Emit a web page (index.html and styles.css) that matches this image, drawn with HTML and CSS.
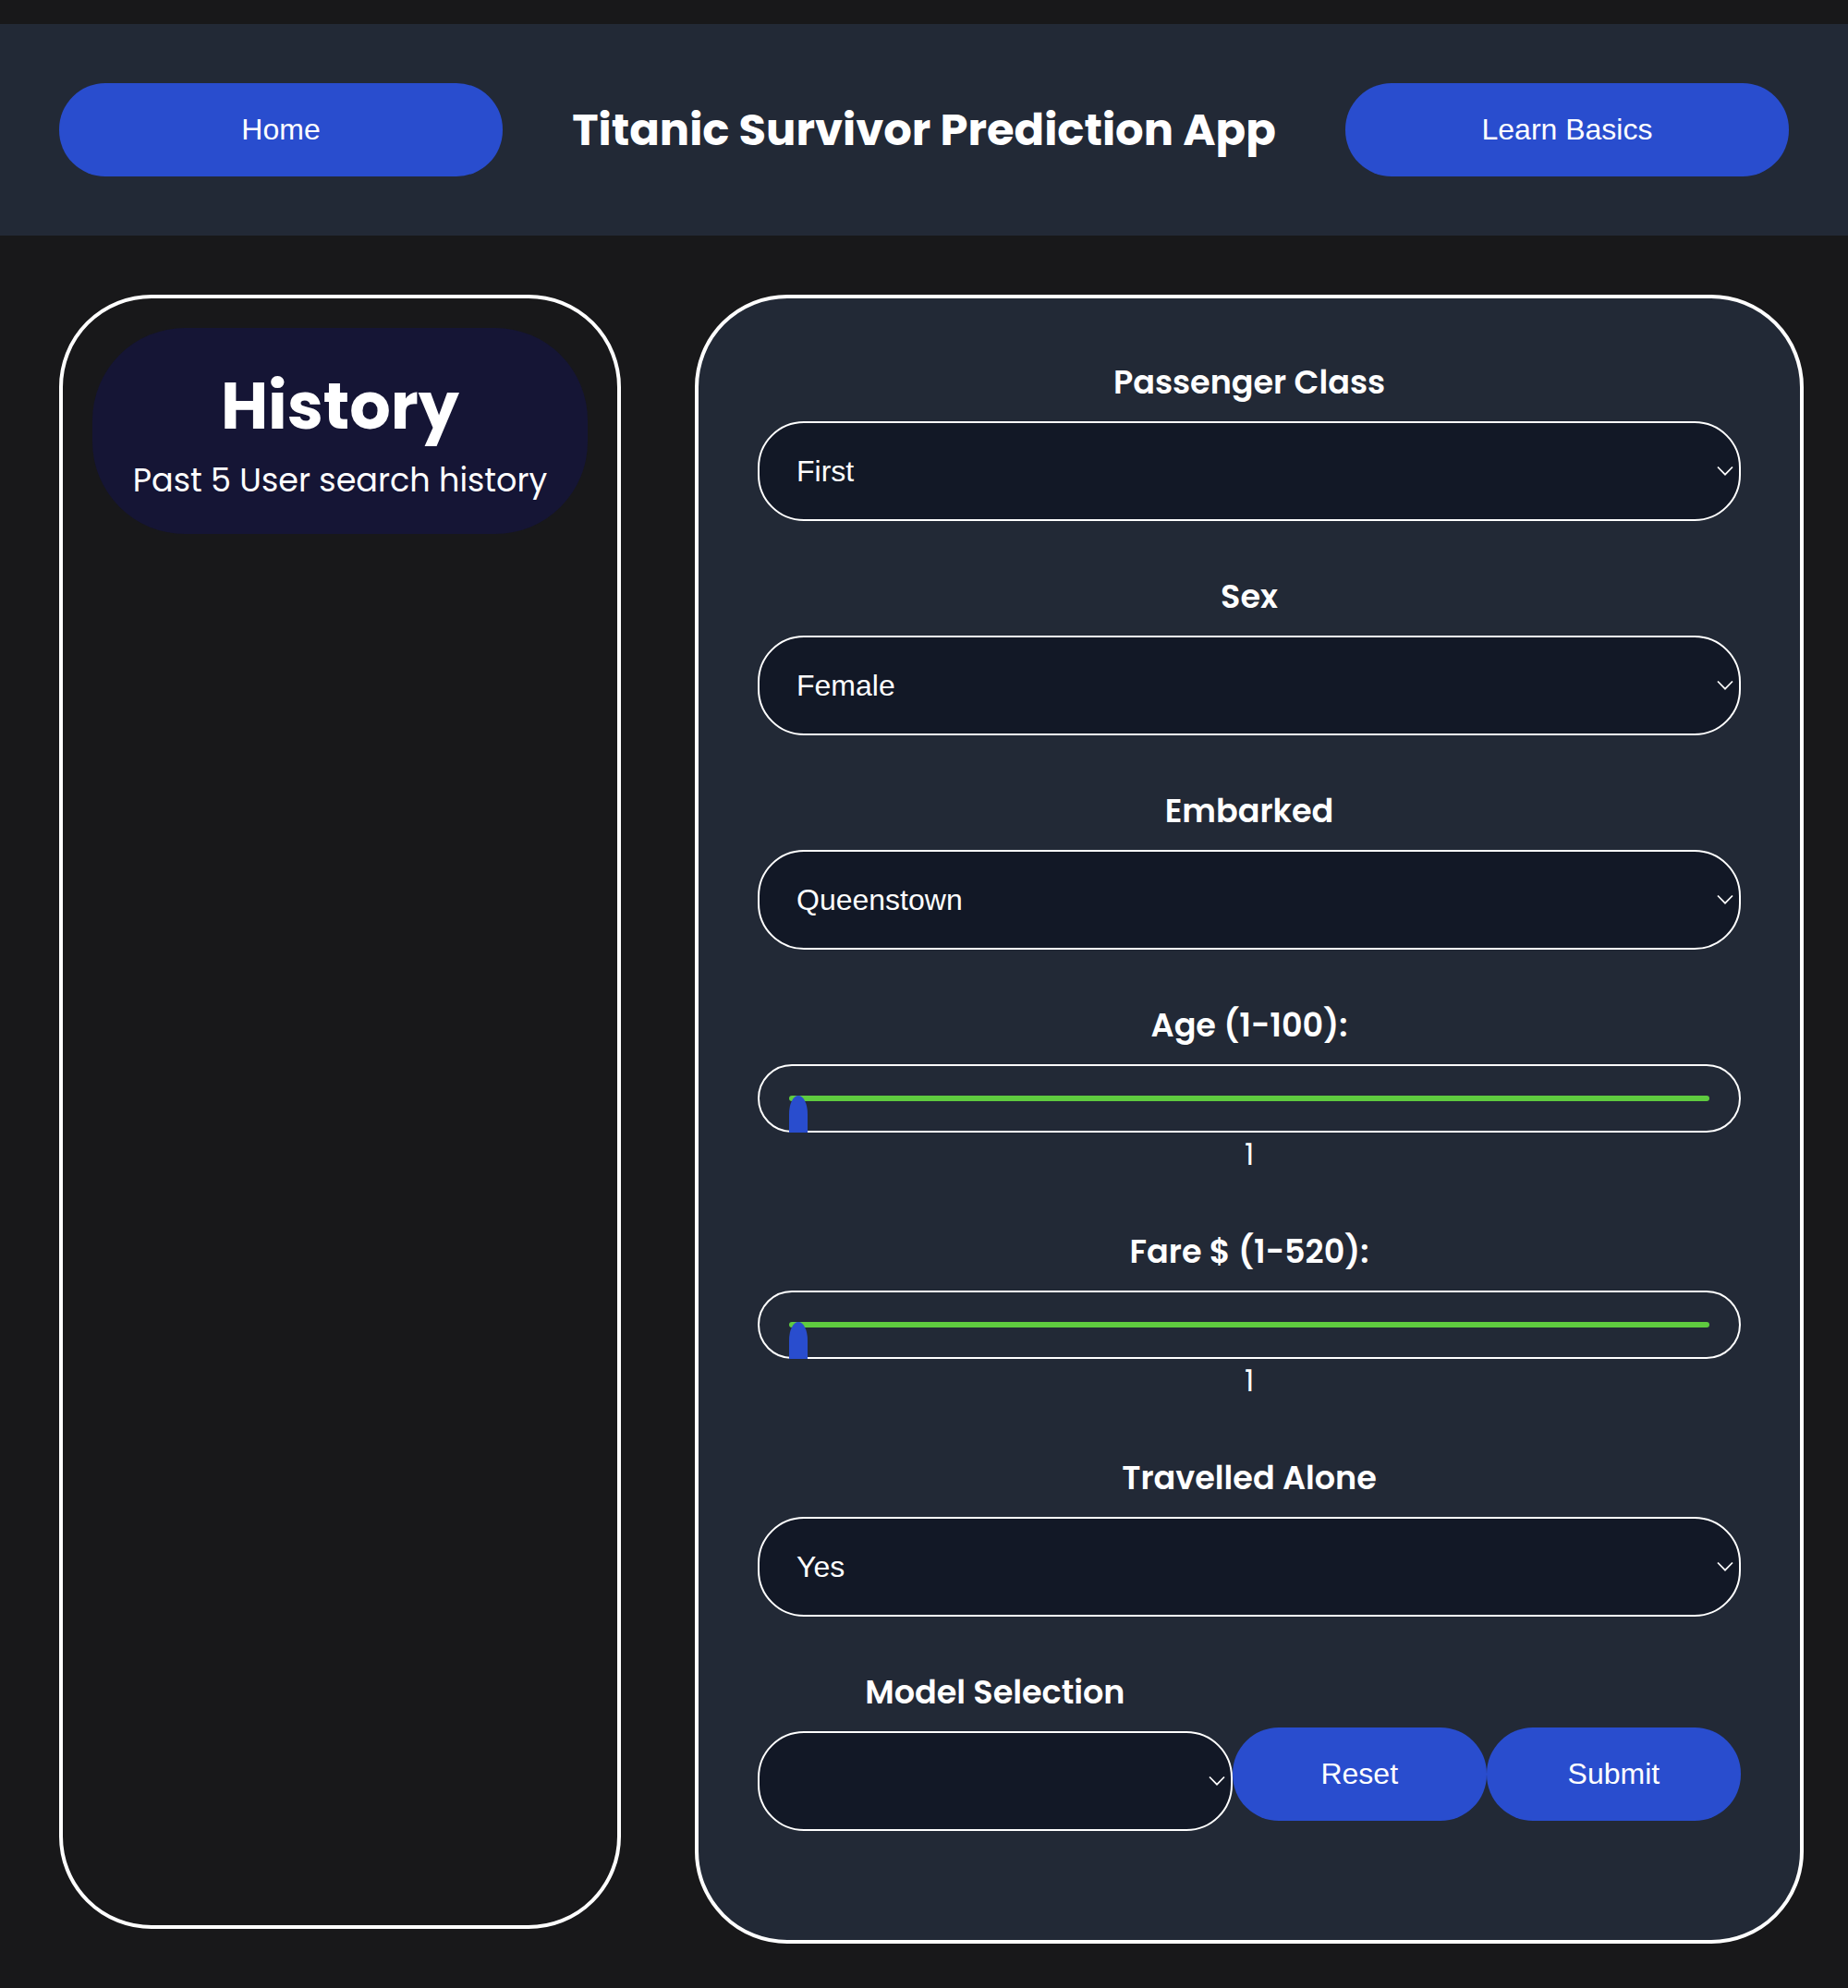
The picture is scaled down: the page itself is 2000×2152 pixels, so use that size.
FILE: index.html
```html
<!DOCTYPE html>
<html lang="en">
<head>
  <meta charset="utf-8">
  <meta name="viewport" content="width=device-width, initial-scale=1">
  <title>Titanic Survivor Prediction App</title>
  <link rel="stylesheet" href="styles.css">
</head>
<body>
  <header class="topbar">
    <button class="button button-nav" type="button">Home</button>
    <h1 class="app-title">Titanic Survivor Prediction App</h1>
    <button class="button button-nav" type="button">Learn Basics</button>
  </header>

  <main class="layout">
    <aside class="history">
      <div class="history-card">
        <h2 class="history-title">History</h2>
        <p class="history-note">Past 5 User search history</p>
      </div>
    </aside>

    <form class="panel">
      <div class="field">
        <label class="label" for="pclass">Passenger Class</label>
        <div class="picker">
          <select class="select" id="pclass"><option>First</option><option>Second</option><option>Third</option></select>
          <svg class="chevron" viewBox="0 0 18 12" aria-hidden="true"><path d="M1 1.5 9 9.7 17 1.5"/></svg>
        </div>
      </div>

      <div class="field">
        <label class="label" for="sex">Sex</label>
        <div class="picker">
          <select class="select" id="sex"><option>Female</option><option>Male</option></select>
          <svg class="chevron" viewBox="0 0 18 12" aria-hidden="true"><path d="M1 1.5 9 9.7 17 1.5"/></svg>
        </div>
      </div>

      <div class="field">
        <label class="label" for="embarked">Embarked</label>
        <div class="picker">
          <select class="select" id="embarked"><option>Queenstown</option><option>Southampton</option><option>Cherbourg</option></select>
          <svg class="chevron" viewBox="0 0 18 12" aria-hidden="true"><path d="M1 1.5 9 9.7 17 1.5"/></svg>
        </div>
      </div>

      <div class="field">
        <label class="label" for="age">Age (1-100):</label>
        <input class="slider" id="age" type="range" min="1" max="100" value="1">
        <output class="value" for="age">1</output>
      </div>

      <div class="field">
        <label class="label" for="fare">Fare $ (1-520):</label>
        <input class="slider" id="fare" type="range" min="1" max="520" value="1">
        <output class="value" for="fare">1</output>
      </div>

      <div class="field">
        <label class="label" for="alone">Travelled Alone</label>
        <div class="picker">
          <select class="select" id="alone"><option>Yes</option><option>No</option></select>
          <svg class="chevron" viewBox="0 0 18 12" aria-hidden="true"><path d="M1 1.5 9 9.7 17 1.5"/></svg>
        </div>
      </div>

      <div class="actions">
        <div class="field">
          <label class="label" for="model">Model Selection</label>
          <div class="picker">
            <select class="select" id="model"><option></option></select>
            <svg class="chevron" viewBox="0 0 18 12" aria-hidden="true"><path d="M1 1.5 9 9.7 17 1.5"/></svg>
          </div>
        </div>
        <button class="button" type="reset">Reset</button>
        <button class="button" type="submit">Submit</button>
      </div>
    </form>
  </main>
</body>
</html>
```
FILE: styles.css
```css
:root {
  --page: #18181a;
  --surface: #222936;
  --field: #121826;
  --blue: #294dce;
  --green: #5fcb3f;
  --navy: #151535;
  --heading: Poppins, Inter, sans-serif;
  --control: "Liberation Sans", Arial, sans-serif;
}

* {
  box-sizing: border-box;
  margin: 0;
}

body {
  padding-top: 26px;
  background: var(--page);
  color: #fff;
  font-family: var(--heading);
}

.topbar {
  display: flex;
  align-items: center;
  justify-content: space-between;
  padding: 64px;
  background: var(--surface);
}

.app-title {
  font-size: 48px;
  line-height: 72px;
  font-weight: 700;
}

.button {
  height: 101px;
  padding: 0 32px;
  border: 0;
  border-radius: 50px;
  background: var(--blue);
  color: #fff;
  font-family: var(--control);
  font-size: 32px;
  cursor: pointer;
}

.button-nav {
  flex: 0 1 480px;
}

.layout {
  display: grid;
  grid-template-columns: 38fr 75fr;
  gap: 80px;
  padding: 64px 48px 48px 64px;
}

.history {
  margin-bottom: 16px;
  padding: 32px;
  border: 4px solid #fff;
  border-radius: 100px;
}

.history-card {
  padding: 32px;
  border-radius: 100px;
  background: var(--navy);
  text-align: center;
}

.history-title {
  font-size: 70px;
  line-height: 106px;
  font-weight: 700;
}

.history-note {
  font-size: 35px;
  line-height: 53px;
  white-space: nowrap;
}

.panel {
  padding: 64px;
  border: 4px solid #fff;
  border-radius: 100px;
  background: var(--surface);
}

.field {
  display: flex;
  flex-direction: column;
  margin-bottom: 55px;
  text-align: center;
}

.label {
  margin-bottom: 16px;
  font-size: 35px;
  line-height: 53px;
  font-weight: 600;
}

/* The chevron shares the select's grid cell */
.picker {
  display: grid;
  align-items: center;
}

.picker > * {
  grid-area: 1 / 1;
}

.select {
  width: 100%;
  height: 108px;
  padding: 0 40px;
  appearance: none;
  border: 2px solid #fff;
  border-radius: 50px;
  background: var(--field);
  color: #fff;
  font-family: var(--control);
  font-size: 32px;
}

.chevron {
  width: 18px;
  height: 12px;
  margin-right: 8px;
  justify-self: end;
  fill: none;
  stroke: #fff;
  stroke-width: 1.7;
  pointer-events: none;
}

.slider {
  width: 100%;
  height: 74px;
  padding: 32px;
  appearance: none;
  border: 2px solid #fff;
  border-radius: 50px;
  background: transparent;
}

.slider::-webkit-slider-runnable-track {
  height: 6px;
  border-radius: 3px;
  background: var(--green);
}

.slider::-webkit-slider-thumb {
  width: 20px;
  height: 40px;
  appearance: none;
  border-radius: 50% 50% 0 0;
  background: var(--blue);
}

.value {
  font-size: 32px;
  line-height: 47px;
}

.actions {
  display: grid;
  grid-template-columns: 28fr 15fr 15fr;
  align-items: center;
}

.actions .field {
  margin-bottom: 54px;
}
```
